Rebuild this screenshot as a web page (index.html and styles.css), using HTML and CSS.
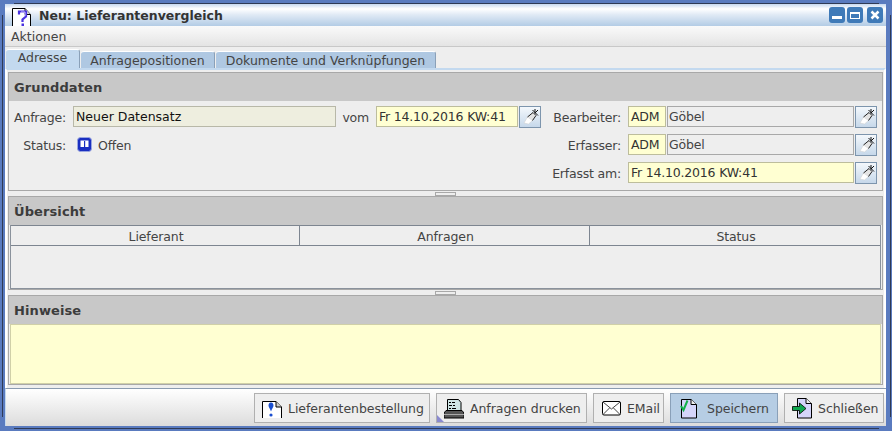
FILE: index.html
```html
<!DOCTYPE html>
<html lang="de">
<head>
<meta charset="utf-8">
<title>Neu: Lieferantenvergleich</title>
<link rel="stylesheet" href="styles.css">
</head>
<body>
<div class="frame">
  <i class="corner tl"></i><i class="corner tr"></i><i class="corner bl"></i><i class="corner br"></i>
  <div class="window">
    <header class="titlebar">
      <svg class="title-icon" width="20" height="22" viewBox="0 0 20 22"><path d="M.5 22V4.500H13l5.500 6V22" fill="#fff" stroke="#000"/><path d="M13 4.500v6h5.500" fill="#d8d8d8" stroke="#000"/><path d="M7 10.500V7.500h7v5L10.500 15.500v2.500" fill="none" stroke="#4a32e0" stroke-width="2.200"/><path d="M9 8l4 0v4" fill="none" stroke="#c8c0fa"/><rect x="9.500" y="19.500" width="2.500" height="2.500" fill="#4a32e0"/></svg>
      <span class="title-text">Neu: Lieferantenvergleich</span>
      <div class="winbtns">
        <span class="winbtn"><svg width="16" height="16" viewBox="0 0 16 16"><rect x="3" y="9" width="10" height="3" fill="#fff"/></svg></span>
        <span class="winbtn"><svg width="16" height="16" viewBox="0 0 16 16"><rect x="3.500" y="5.500" width="9" height="6" fill="none" stroke="#fff"/><rect x="3" y="5" width="10" height="2" fill="#fff"/></svg></span>
        <span class="winbtn close"><svg width="16" height="16" viewBox="0 0 16 16"><path d="M4.500 4.500l7 7M11.500 4.500l-7 7" stroke="#fff" stroke-width="2.500"/></svg></span>
      </div>
    </header>
    <nav class="menubar"><span>Aktionen</span></nav>
    <div class="tabs">
      <span class="tab active t1">Adresse</span>
      <span class="tab t2">Anfragepositionen</span>
      <span class="tab t3">Dokumente und Verknüpfungen</span>
    </div>
    <main class="content">
      <section class="panel panel-grund">
        <h2 class="panel-head">Grunddaten</h2>
        <div class="form">
          <label class="lbl">Anfrage:</label>
          <div class="field readonly">Neuer Datensatz</div>
          <label class="lbl">vom</label>
          <div class="group"><div class="field yellow date-short">Fr 14.10.2016 KW:41</div><button class="pick"><svg class="pin" viewBox="0 0 20 20"><use href="#pin"/></svg></button></div>
          <label class="lbl">Bearbeiter:</label>
          <div class="group"><div class="field yellow code">ADM</div><div class="field grey name">Göbel</div><button class="pick"><svg class="pin" viewBox="0 0 20 20"><use href="#pin"/></svg></button></div>

          <label class="lbl">Status:</label>
          <div class="status">
            <svg width="16" height="16" viewBox="0 0 16 16"><rect x=".5" y=".5" width="14" height="14" rx="3" fill="#1a2fc0" stroke="#9aa6e0"/><rect x="3.500" y="3.500" width="8" height="6.500" fill="#fff"/><rect x="7" y="4" width="1.200" height="6" fill="#1a2fc0"/></svg>
            <span class="status-text">Offen</span>
          </div>
          <span class="spacer-2"></span>
          <label class="lbl">Erfasser:</label>
          <div class="group"><div class="field yellow code">ADM</div><div class="field grey name">Göbel</div><button class="pick"><svg class="pin" viewBox="0 0 20 20"><use href="#pin"/></svg></button></div>

          <span class="spacer-4"></span>
          <label class="lbl">Erfasst am:</label>
          <div class="group"><div class="field yellow date-long">Fr 14.10.2016 KW:41</div><button class="pick"><svg class="pin" viewBox="0 0 20 20"><use href="#pin"/></svg></button></div>
        </div>
      </section>
      <div class="splitter"><i></i></div>
      <section class="panel panel-over">
        <h2 class="panel-head">Übersicht</h2>
        <div class="table">
          <div class="thead"><span>Lieferant</span><span>Anfragen</span><span>Status</span></div>
        </div>
      </section>
      <div class="splitter"><i></i></div>
      <section class="panel panel-hint">
        <h2 class="panel-head">Hinweise</h2>
        <div class="hint"></div>
      </section>
    </main>
    <footer class="actions">
      <button class="act b1"><svg width="20" height="24" viewBox="0 0 20 24"><path d="M.5 22V5.500h13.500l5.500 5.500v11" fill="#fff" stroke="#000"/><path d="M14 5.500V11h5.500" fill="#ccc" stroke="#000"/><path d="M9 6.500c-1.800 0-2.500 1.500-2.500 3s1.500 3 2.500 6c1-3 2.500-4.500 2.500-6s-.7-3-2.500-3z" fill="#1b4fd0"/><circle cx="9" cy="19" r="1.600" fill="#1b4fd0"/></svg>Lieferantenbestellung</button>
      <button class="act b2"><svg width="20" height="24" viewBox="0 0 20 24"><path d="M3.500 3.500h11l2.500 3v8H3.500z" fill="#cfe6e6" stroke="#000"/><path d="M5 6.500h2M8 6.500h3M5 9.500h3M9 9.500h2M5 12.500h2M8 12.500h4" stroke="#000"/><path d="M2 14.500h16l2 2.500v5H0v-5z" fill="#555" stroke="#000"/><rect x="0" y="18" width="20" height="1" fill="#aaa"/></svg>Anfragen drucken</button>
      <button class="act b3"><svg width="20" height="24" viewBox="0 0 20 24"><rect x="1.500" y="5.500" width="18" height="13.500" rx="1.500" fill="#fff" stroke="#000"/><path d="M2 6l8.500 7L19 6M2 18.500l6.500-6.500M19 18.500l-6.500-6.500" fill="none" stroke="#444"/></svg>EMail</button>
      <button class="act save"><svg width="20" height="24" viewBox="0 0 20 24"><path d="M1.500 22V3.500H11l5.500 5V22z" fill="#d5d5fa" stroke="#000"/><path d="M11 3.500v5h5.500" fill="#eee" stroke="#000"/><path d="M1 10l2.500 4L7.500 4.500" fill="none" stroke="#12b04a" stroke-width="2"/></svg>Speichern</button>
      <button class="act b5"><svg width="20" height="24" viewBox="0 0 20 24"><path d="M5.500 22V2.500H14l5.500 5V22z" fill="#d5d5fa" stroke="#000"/><path d="M14 2.500v5h5.500" fill="#eee" stroke="#000"/><path d="M.5 10.500h7V7l6.500 5.500L7.500 18v-3.500h-7z" fill="#10a850" stroke="#000" stroke-width=".8"/></svg>Schließen</button>
    </footer>
  </div>
</div>
<svg class="defs" width="0" height="0"><defs><g id="pin"><path d="M4 16l3.500-6 5 3.500-4 3.500z" fill="#fff" stroke="#ccc" stroke-width=".5"/><path d="M7.500 10L13 5.500l3 3-3.500 5" fill="#e4e4e4" stroke="#222"/><path d="M12.500 3l5.500 5.500M15 2v4.500M15 6l3-3" stroke="#111" fill="none"/></g></defs></svg>
</body>
</html>
```
FILE: styles.css
```css
* { box-sizing: border-box; }
html, body { margin: 0; padding: 0; }
body {
  width: 892px;
  height: 431px;
  overflow: hidden;
  background: #5a7bbf;
  font-family: "DejaVu Sans", sans-serif;
  font-size: 12.5px;
  color: #444;
  padding: 3px 1px 2px 2px;
}
.defs { display: block; }
.frame {
  position: relative;
  height: 426px;
  border: 1px solid #2f3a55;
  padding: 0 4px 2px 2px;
}
.corner { position: absolute; width: 12px; height: 12px; background: #5a7bbf; }
.corner.tl { left: -1px; top: -1px; }
.corner.tr { right: -1px; top: -1px; }
.corner.bl { left: -1px; bottom: -1px; }
.corner.br { right: -1px; bottom: -1px; }
.window {
  position: relative;
  height: 422px;
  display: flex;
  flex-direction: column;
  background: #eee;
}
.titlebar {
  height: 22px;
  flex: none;
  display: flex;
  align-items: center;
  padding-left: 7px;
  background: linear-gradient(#c8d9f0 0, #fff 22%, #dfe9f5 50%, #b3cce5 100%);
  color: #333;
}
.title-icon { flex: none; align-self: flex-end; }
.title-text { margin-left: 7px; font-weight: bold; font-size: 12.5px; }
.winbtns { margin-left: auto; display: flex; gap: 2px; padding-right: 3px; }
.winbtn { width: 16px; height: 16px; border-radius: 3px; background: #3f7ab8; display: block; }
.winbtn.close { margin-left: 2px; }
.winbtn svg { display: block; }
.menubar {
  height: 21px;
  flex: none;
  background: linear-gradient(#fafafa, #e4e4e4);
  border-bottom: 1px solid #c8c8c8;
  padding: 3px 0 0 6px;
}
.tabs {
  height: 21px;
  flex: none;
  display: flex;
  align-items: flex-end;
  padding-left: 1px;
  gap: 1px;
}
.tab {
  height: 17px;
  padding-top: 1px;
  text-align: center;
  background: #afc8e2;
  border-right: 1px solid #8aa0b8;
  border-top: 1px solid #fff;
  border-radius: 3px 3px 0 0;
  color: #444;
}
.t1 { width: 74px; }
.t2 { width: 134px; }
.t3 { width: 220px; }
.tab.active { height: 19px; background: #c3d9ef; padding-top: 0; }
.content {
  height: 320px;
  flex: none;
  border-top: 2px solid #c3d9ef;
  padding: 2px 1px 0;
  display: flex;
  flex-direction: column;
  border-left: 2px solid #fff;
  border-right: 2px solid #fff;
}
.panel { flex: none; border: 1px solid #a8a8a8; }
.panel-grund { height: 119px; }
.panel-over { height: 94px; }
.panel-hint { height: 90px; }
.panel-head {
  margin: 0;
  height: 28px;
  background: #c8c8c8;
  font-size: 13px;
  font-weight: bold;
  color: #3c3c3c;
  padding: 7px 5px 0;
  letter-spacing: .1px;
}
.splitter { height: 5px; flex: none; display: flex; justify-content: center; align-items: center; }
.splitter i { display: block; width: 21px; height: 4px; border: 1px solid #a8a8a8; }
.form {
  display: grid;
  grid-template-columns: 64px 263px 40px 165px 87px 1fr;
  grid-auto-rows: 28px;
  padding-top: 5px;
  align-items: start;
}
.lbl { justify-self: end; padding-top: 4px; padding-right: 7px; white-space: nowrap; letter-spacing: -.2px; }
.field {
  height: 21px;
  border: 1px solid #a8a8a8;
  padding: 2px 0 0 2px;
  white-space: nowrap;
}
.readonly { background: #eeeedf; color: #111; border-color: #b8b8a8; }
.yellow { background: #ffffd2; border-color: #bdbd9c; color: #333; letter-spacing: -.2px; }
.grey { background: #eee; padding-left: 1px; letter-spacing: -.2px; }
.group { display: flex; gap: 1px; }
.date-short { width: 142px; }
.code { width: 38px; }
.name { width: 187px; }
.date-long { width: 226px; }
.pick {
  width: 22px;
  height: 22px;
  padding: 0;
  border: 1px solid #7d95ad;
  background: linear-gradient(#f4f8fc, #c6d8ea);
  display: flex;
  align-items: center;
  justify-content: center;
}
.pin { width: 20px; height: 20px; display: block; }
.status { display: flex; align-items: center; gap: 5px; height: 21px; padding-left: 4px; }
.status-text { padding-top: 1px; letter-spacing: -.2px; }
.spacer-2 { grid-column: span 2; }
.spacer-4 { grid-column: span 4; }
.table { margin: 0 1px; border-left: 1px solid #8a929c; border-right: 1px solid #8a929c; border-bottom: 1px solid #8a929c; height: 64px; }
.thead {
  height: 21px;
  display: grid;
  grid-template-columns: 289px 290px 1fr;
  border-top: 1px solid #7d8590;
  border-bottom: 1px solid #7d8590;
  text-align: center;
  letter-spacing: -.1px;
}
.thead span { border-right: 1px solid #7d8590; padding: 3px 0 0 2px; }
.thead span:last-child { border-right: 0; }
.hint { margin: 0 1px; height: 60px; background: #ffffd2; border: 1px solid #d0d0a8; }
.actions {
  flex: 1;
  display: flex;
  justify-content: flex-end;
  gap: 6px;
  padding: 4px 2px 0 0;
  background: linear-gradient(#fff, #dcdcdc);
  border-top: 1px solid #8a9bb0;
  border-left: 1px solid #c3d9ef;
}
.act {
  position: relative;
  height: 30px;
  padding: 0 0 0 7px;
  display: flex;
  align-items: center;
  gap: 6px;
  font: inherit;
  letter-spacing: -.05px;
  color: #444;
  background: #eee;
  border: 1px solid #b0b0b0;
  text-align: left;
}
.act svg { flex: none; }
.b1 { width: 176px; }
.b2 { width: 151px; }
.b2::after {
  content: "";
  position: absolute;
  left: 0;
  bottom: 0;
  border-style: solid;
  border-width: 7px 0 0 7px;
  border-color: transparent transparent transparent #8a8ad0;
}
.b3 { width: 71px; }
.save { width: 108px; background: #b6cde4; border-color: #8aa0b8; gap: 7px; padding-left: 9px; }
.b5 { width: 100px; }
```
